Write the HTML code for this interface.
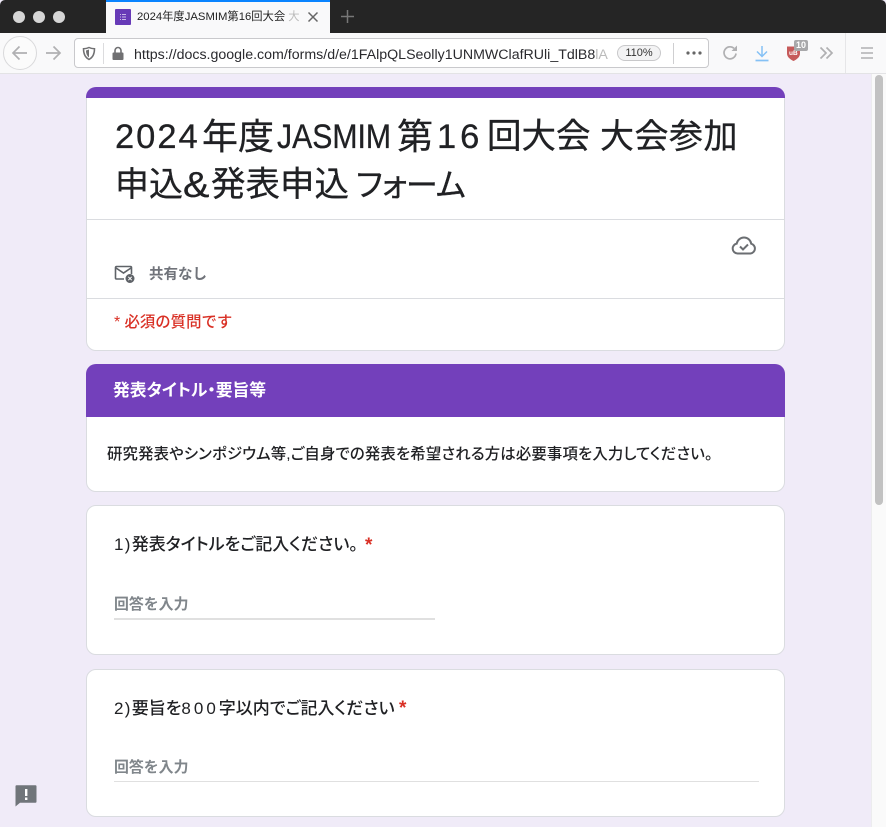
<!DOCTYPE html>
<html lang="ja"><head><meta charset="utf-8"><style>
*{box-sizing:border-box}
html,body{margin:0;padding:0;width:886px;height:827px;overflow:hidden;background:#f0ebf8;font-family:"Liberation Sans","Noto Sans CJK JP",sans-serif;color:#202124}
.a{position:absolute;white-space:nowrap}
.card{position:absolute;left:86px;width:699px;background:#fff;border:1px solid #dadce0;border-radius:10px}
.t{position:absolute;white-space:nowrap;font-size:35px;line-height:54px;font-weight:400;color:#202124;-webkit-text-stroke:.3px #202124}
.p{font-feature-settings:"palt"}
</style></head><body>
<div class="a" style="left:0;top:0;width:886px;height:33px;background:#252525;border-radius:5px 5px 0 0"></div>
<div class="a" style="left:13px;top:11px;width:12px;height:12px;border-radius:50%;background:#d6d6d6"></div>
<div class="a" style="left:33px;top:11px;width:12px;height:12px;border-radius:50%;background:#d6d6d6"></div>
<div class="a" style="left:53px;top:11px;width:12px;height:12px;border-radius:50%;background:#d6d6d6"></div>
<div class="a" style="left:106px;top:0;width:224px;height:33px;background:#f9f9fa;border-top:2px solid #0a84ff"></div>
<div class="a" style="left:115px;top:9px;width:16px;height:16px;background:#673ab7;border-radius:1px"></div>
<svg class="a" style="left:115px;top:9px" width="16" height="16"><path d="M5 5.500h1M7 5.500h4M5 8h1M7 8h4M5 10.500h1M7 10.500h4" stroke="#c9b8e8" stroke-width="1"/></svg>
<div class="a" style="left:137px;top:10px;width:166px;overflow:hidden;font-size:11.300px;line-height:15px;color:#222">2024年度JASMIM第16回大会 <span style="color:#bbb">大</span></div>
<svg class="a" style="left:307px;top:11px" width="12" height="12"><path d="M1.500 1.500l9 9M10.500 1.500l-9 9" stroke="#666" stroke-width="1.500"/></svg>
<svg class="a" style="left:340px;top:9px" width="15" height="15"><path d="M7.500 1v13M1 7.500h13" stroke="#777" stroke-width="1.500"/></svg>

<div class="a" style="left:0;top:33px;width:886px;height:41px;background:#f9f9fa;border-bottom:1px solid #e3e3e5"></div>
<div class="a" style="left:3px;top:36px;width:34px;height:34px;border:1px solid #d9d9db;border-radius:50%;background:#fbfbfb"></div>
<svg class="a" style="left:11px;top:44px" width="18" height="18"><path d="M16 9H2M8.500 2.500L2 9l6.500 6.500" fill="none" stroke="#b0b0b2" stroke-width="1.700"/></svg>
<svg class="a" style="left:44px;top:44px" width="18" height="18"><path d="M2 9h14M9.500 2.500L16 9l-6.500 6.500" fill="none" stroke="#b0b0b2" stroke-width="1.700"/></svg>
<div class="a" style="left:74px;top:38px;width:635px;height:30px;background:#fff;border:1px solid #c9c9cc;border-radius:4px"></div>
<svg class="a" style="left:82px;top:46px" width="14" height="15"><path d="M7 1.500c2 1 3.500 1.300 5.500 1.300 0 5-1.500 8.700-5.500 10.700C3 11.500 1.500 7.800 1.500 2.800 3.500 2.800 5 2.500 7 1.500z" fill="none" stroke="#707072" stroke-width="1.500"/><path d="M7 3.500v8c-2-1.500-3-4-3-7z" fill="#707072"/></svg>
<div class="a" style="left:103px;top:43px;width:1px;height:21px;background:#dcdcde"></div>
<svg class="a" style="left:111px;top:46px" width="14" height="15"><path d="M4 7V4.500a3 3 0 0 1 6 0V7" fill="none" stroke="#707072" stroke-width="1.600"/><rect x="1.500" y="6.500" width="11" height="7.500" rx="1" fill="#707072"/></svg>
<div class="a" style="left:134px;top:45px;width:475px;overflow:hidden;font-size:14.200px;line-height:20px;color:#2a2a2e">https://docs.google.com/forms/d/e/1FAlpQLSeolly1UNMWClafRUli_TdlB8<span style="color:#bbb">lA</span></div>
<div class="a" style="left:617px;top:45px;width:44px;height:16px;border:1px solid #c8c8ca;background:#f3f3f4;border-radius:8px;font-size:11px;line-height:14px;text-align:center;color:#333">110%</div>
<div class="a" style="left:673px;top:43px;width:1px;height:21px;background:#cfcfd1"></div>
<svg class="a" style="left:685px;top:49px" width="18" height="8"><circle cx="3" cy="4" r="1.600" fill="#666"/><circle cx="9" cy="4" r="1.600" fill="#666"/><circle cx="15" cy="4" r="1.600" fill="#666"/></svg>
<svg class="a" style="left:722px;top:44px" width="17" height="18"><path d="M14 9.500a6 6 0 1 1-2-5.200" fill="none" stroke="#b0b0b2" stroke-width="1.700"/><path d="M15 1.500v5.500H9.500z" fill="#b0b0b2"/></svg>
<svg class="a" style="left:754px;top:44px" width="16" height="18"><path d="M8 2v10M3 7.500L8 12.500 13 7.500" fill="none" stroke="#85c1f5" stroke-width="1.500"/><path d="M1.500 16.500h13" stroke="#85c1f5" stroke-width="1.700"/></svg>
<svg class="a" style="left:786px;top:44px" width="16" height="18"><path d="M1 2.500h13v7c0 3.500-3 5.800-6.500 7.500C4 15.300 1 13 1 9.500z" fill="#c65a5a"/><text x="3" y="11" font-size="6.500" font-weight="700" fill="#fff" font-family="Liberation Sans">uB</text></svg>
<div class="a" style="left:794px;top:40px;width:14px;height:11px;background:#a8a8aa;border-radius:2px;color:#fff;font-size:9px;font-weight:700;line-height:11px;text-align:center">10</div>
<svg class="a" style="left:819px;top:46px" width="15" height="14"><path d="M1.500 1.500L7 7l-5.500 5.500M7.500 1.500L13 7l-5.500 5.500" fill="none" stroke="#b0b0b2" stroke-width="1.700"/></svg>
<div class="a" style="left:845px;top:33px;width:1px;height:40px;background:#e6e6e8"></div>
<svg class="a" style="left:860px;top:46px" width="14" height="14"><path d="M1 2h12M1 7h12M1 12h12" stroke="#b0b0b2" stroke-width="1.600"/></svg>

<div class="a" style="left:871px;top:74px;width:15px;height:753px;background:#fafafa;border-left:1px solid #ececee"></div>
<div class="a" style="left:875px;top:75px;width:8px;height:430px;background:#c2c2c2;border-radius:4px"></div>

<div class="card" style="top:87px;height:264px"></div>
<div class="a" style="left:86px;top:87px;width:699px;height:11px;background:#7340bb;border-radius:10px 10px 0 0"></div>
<div class="a" style="left:87px;top:219px;width:697px;height:1px;background:#dadce0"></div>
<div class="a" style="left:87px;top:298px;width:697px;height:1px;background:#dadce0"></div>

<div class="t" style="left:115px;top:110px;letter-spacing:2px;font-size:34.500px">2024</div>
<div class="t" style="left:202px;top:110px;font-size:36px">年度</div>
<div class="t" style="left:277px;top:110px;font-size:34.500px;transform:scaleX(.875);transform-origin:0 0">JASMIM</div>
<div class="t" style="left:397px;top:110px;font-size:36px">第</div>
<div class="t" style="left:437px;top:110px;font-size:34.500px;letter-spacing:4px">16</div>
<div class="t" style="left:487px;top:110px;font-size:34.500px">回大会</div>
<div class="t" style="left:600px;top:110px;font-size:34px;letter-spacing:.5px">大会参加</div>
<div class="t" style="left:115px;top:158px;font-size:34px">申込</div>
<div class="t" style="left:183px;top:158px;font-size:36px;transform:scaleX(1.100);transform-origin:0 0">&amp;</div>
<div class="t" style="left:211px;top:158px;font-size:34.500px">発表申込</div>
<div class="t p" style="left:356px;top:158px;font-size:32px;letter-spacing:-.8px">フォーム</div>

<svg class="a" style="left:731px;top:235px" width="26" height="21" viewBox="0 0 26 21"><path d="M6.500 18.500a5 5 0 0 1-.8-9.900A7.500 7.500 0 0 1 13 2.500a7.300 7.300 0 0 1 7.200 6.200 5 5 0 0 1-.7 9.800z" fill="none" stroke="#6b6e72" stroke-width="2"/><path d="M9 11.500l3 3 5-5" fill="none" stroke="#6b6e72" stroke-width="2"/></svg>
<svg class="a" style="left:114px;top:265px" width="22" height="20" viewBox="0 0 22 20"><path d="M10 14H2.500a1 1 0 0 1-1-1V2.500a1 1 0 0 1 1-1h14a1 1 0 0 1 1 1V9M2 3l7.500 5L17 3" fill="none" stroke="#5f6368" stroke-width="1.600"/><circle cx="16" cy="13.500" r="4.500" fill="#5f6368"/><path d="M14.300 11.800l3.400 3.400M17.700 11.800l-3.400 3.400" stroke="#fff" stroke-width="1"/></svg>
<div class="a" style="left:149px;top:266px;font-size:14.500px;line-height:19px;font-weight:700;color:#70737a">共有なし</div>
<div class="a" style="left:114px;top:313px;font-size:15.400px;line-height:19px;font-weight:500;color:#d93025"><span style="font-weight:500;font-size:16px">*</span> 必須の質問です</div>

<div class="card" style="top:364px;height:128px"></div>
<div class="a" style="left:86px;top:364px;width:699px;height:53px;background:#7340bb;border-radius:10px 10px 0 0"></div>
<div class="a p" style="left:113px;top:380px;font-size:16.800px;line-height:22px;font-weight:700;color:#fff">発表タイトル・要旨等</div>
<div class="a p" style="left:107px;top:445px;font-size:15.400px;letter-spacing:.15px;line-height:20px;font-weight:500;color:#202124">研究発表やシンポジウム等,ご自身での発表を希望される方は必要事項を入力してください。</div>

<div class="card" style="top:505px;height:150px"></div>
<div class="a p" style="left:114px;top:534px;font-size:17px;line-height:22px;font-weight:500;color:#202124"><span style="letter-spacing:1.300px">1)</span>発表タイトルをご記入ください。</div>
<div class="a" style="left:365px;top:534px;font-size:19px;line-height:24px;font-weight:700;color:#d93025">*</div>
<div class="a" style="left:114px;top:595px;font-size:14.900px;line-height:20px;font-weight:700;color:#80868b">回答を入力</div>
<div class="a" style="left:114px;top:618px;width:321px;height:2px;background:#e0e0e0"></div>

<div class="card" style="top:669px;height:148px"></div>
<div class="a p" style="left:114px;top:698px;font-size:17px;line-height:22px;font-weight:500;color:#202124"><span style="letter-spacing:1.300px">2)</span>要旨を<span style="letter-spacing:3px">800</span>字以内でご記入ください</div>
<div class="a" style="left:399px;top:697px;font-size:19px;line-height:24px;font-weight:700;color:#d93025">*</div>
<div class="a" style="left:114px;top:758px;font-size:14.900px;line-height:20px;font-weight:700;color:#80868b">回答を入力</div>
<div class="a" style="left:114px;top:781px;width:645px;height:1px;background:#e0e0e0"></div>

<svg class="a" style="left:15px;top:784px" width="23" height="23" viewBox="0 0 23 23"><path d="M1.500 1.200h19a1 1 0 0 1 1 1v15.600a1 1 0 0 1-1 1H5L.5 22.500V2.200a1 1 0 0 1 1-1z" fill="#70757a"/><path d="M10 5h2.400v7H10zM10 13.500h2.400V16H10z" fill="#fff"/></svg>
</body></html>
